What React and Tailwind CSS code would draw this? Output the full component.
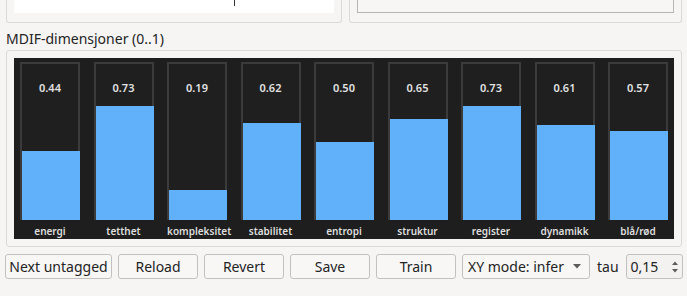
import React from 'react';

const dims = [
  { name: 'energi', value: 0.44 },
  { name: 'tetthet', value: 0.73 },
  { name: 'kompleksitet', value: 0.19 },
  { name: 'stabilitet', value: 0.62 },
  { name: 'entropi', value: 0.5 },
  { name: 'struktur', value: 0.65 },
  { name: 'register', value: 0.73 },
  { name: 'dynamikk', value: 0.61 },
  { name: 'blå/rød', value: 0.57 },
];

const BAR_H = 156;

function Bar({ name, value }) {
  return (
    <div className="flex flex-col w-[60px]">
      <div className="relative h-[158px] border-2 border-[#3b3b3b] bg-[#1f1f1f] flex flex-col items-center pt-[17px]">
        <div
          className="absolute left-0 right-[-2px] bottom-[-2px] bg-[#60b1f9]"
          style={{ height: Math.round(value * BAR_H) }}
        />
        <span className="relative text-[11px] leading-[14px] font-semibold text-[#e2e2e2]">
          {value.toFixed(2)}
        </span>
      </div>
      <div className="h-[18px] leading-[22px] text-center text-[10px] font-semibold text-[#dedede] whitespace-nowrap">
        {name}
      </div>
    </div>
  );
}

function Button({ children, className = '' }) {
  return (
    <div
      className={
        'h-[25px] flex items-center justify-center border border-[#c3c1bf] rounded-[3px] bg-[#f8f7f6] text-[14px] text-[#232323] ' +
        className
      }
    >
      {children}
    </div>
  );
}

export default function App() {
  return (
    <div
      className="w-[687px] h-[296px] overflow-hidden bg-[#f6f5f4]"
      style={{ fontFamily: '"Noto Sans", "Open Sans", sans-serif' }}
    >
      {/* top panels, cut off */}
      <div className="flex pl-[6px] gap-[7px]">
        <div className="w-[336px] h-[23px] border border-t-0 border-[#dcdad8] rounded-b-[3px] px-[7px]">
          <div className="h-[13px] bg-white flex pl-[220px]">
            <div className="w-px h-[6px] bg-[#333]" />
          </div>
        </div>
        <div className="w-[333px] h-[23px] border border-t-0 border-[#dcdad8] rounded-b-[3px] px-[7px]">
          <div className="h-[13px] border border-t-0 border-[#b8b6b4] bg-[#f7f6f5]" />
        </div>
      </div>

      <div className="pl-[6px] mt-[6px] text-[14px] leading-[19px] text-[#232323]">
        MDIF-dimensjoner (0..1)
      </div>

      <div className="ml-[6px] mt-[2px] w-[676px] h-[197px] border border-[#dcdad8] rounded-[3px] p-[7px]">
        <div className="h-full bg-[#1e1e1e] px-[6px] pt-[4px] flex justify-between">
          {dims.map((d) => (
            <Bar key={d.name} {...d} />
          ))}
        </div>
      </div>

      <div className="flex items-center pl-[5px] mt-[7px] gap-[6px]">
        <Button className="w-[107px]">Next untagged</Button>
        <Button className="w-[80px]">Reload</Button>
        <Button className="w-[80px]">Revert</Button>
        <Button className="w-[80px]">Save</Button>
        <Button className="w-[80px]">Train</Button>
        <div className="w-[128px] h-[25px] flex items-center justify-between pl-[5px] pr-[8px] border border-[#c3c1bf] rounded-[3px] bg-[#f8f7f6] text-[14px] text-[#232323]">
          <span>XY mode: infer</span>
          <svg width="8" height="5" viewBox="0 0 8 5">
            <path d="M0 0 L8 0 L4 4.5 Z" fill="#5b5b5b" />
          </svg>
        </div>
        <span className="ml-[1px] text-[14px] text-[#232323]">tau</span>
        <div className="ml-[1px] w-[57px] h-[25px] flex items-center justify-between pl-[4px] pr-[3px] border border-[#c3c1bf] rounded-[3px] bg-[#f3f2f1] text-[14px] text-[#232323]">
          <span>0,15</span>
          <svg width="8" height="14" viewBox="0 0 8 14">
            <path d="M1 5 L4 1.5 L7 5 Z" fill="#5b5b5b" />
            <path d="M1 9 L4 12.5 L7 9 Z" fill="#5b5b5b" />
          </svg>
        </div>
      </div>
    </div>
  );
}
